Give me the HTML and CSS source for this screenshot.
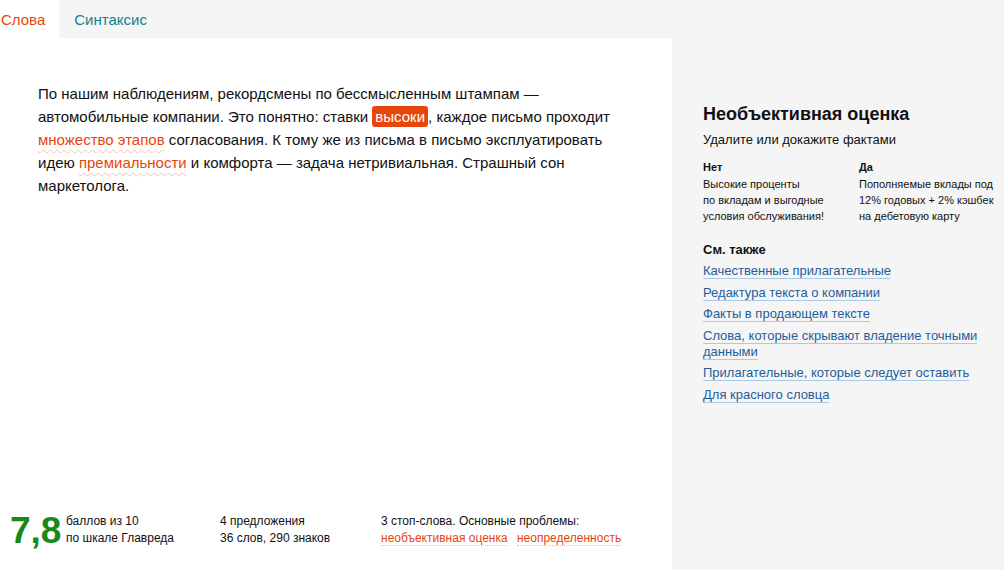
FILE: index.html
```html
<!DOCTYPE html>
<html lang="ru">
<head>
    <meta charset="UTF-8">
    <title>Главред</title>
    <link rel="stylesheet" href="styles.css">
</head>
<body>
    <div class="page">
        <!-- Редактор -->
        <main class="editor">
            <nav class="tabs">
                <a href="#" class="tab active">Слова</a>
                <a href="#" class="tab">Синтаксис</a>
            </nav>
            <div class="text">
                По нашим наблюдениям, рекордсмены по бессмысленным штампам —
                автомобильные компании. Это понятно: ставки <span class="hl">высоки</span>, каждое письмо проходит
                <span class="mark">множество этапов</span> согласования. К тому же из письма в письмо эксплуатировать
                идею <span class="mark">премиальности</span> и комфорта — задача нетривиальная. Страшный сон
                маркетолога.
            </div>
            <div class="stats">
                <div class="score">7,8</div>
                <div class="stat stat-score">баллов из 10<br>по шкале Главреда</div>
                <div class="stat stat-count">4 предложения<br>36 слов, 290 знаков</div>
                <div class="stat">
                    3 стоп-слова. Основные проблемы:<br>
                    <a href="#" class="problem">необъективная оценка</a>
                    <a href="#" class="problem">неопределенность</a>
                </div>
            </div>
        </main>

        <!-- Описание -->
        <aside class="sidebar">
            <h2>Необъективная оценка</h2>
            <p class="lead">Удалите или докажите фактами</p>
            <div class="examples">
                <div class="example">
                    <h4>Нет</h4>
                    <p>Высокие проценты<br>по вкладам и выгодные<br>условия обслуживания!</p>
                </div>
                <div class="example">
                    <h4>Да</h4>
                    <p>Пополняемые вклады под<br>12% годовых + 2% кэшбек<br>на дебетовую карту</p>
                </div>
            </div>
            <h3>См. также</h3>
            <ul class="links">
                <li><a href="#">Качественные прилагательные</a></li>
                <li><a href="#">Редактура текста о компании</a></li>
                <li><a href="#">Факты в продающем тексте</a></li>
                <li><a href="#">Слова, которые скрывают владение точными данными</a></li>
                <li><a href="#">Прилагательные, которые следует оставить</a></li>
                <li><a href="#">Для красного словца</a></li>
            </ul>
        </aside>
    </div>
</body>
</html>
```

FILE: styles.css
```css
* {
    margin: 0;
    padding: 0;
    box-sizing: border-box;
}

body {
    font-family: "Liberation Sans", Arial, sans-serif;
    color: #111;
    background-color: #f5f5f5;
}

.page {
    display: flex;
    height: 570px;
}

/* Редактор */
.editor {
    flex: none;
    width: 672px;
    display: flex;
    flex-direction: column;
    background-color: #fff;
}

.tabs {
    display: flex;
    height: 38px;
    background-color: #f5f5f5;
}

.tab {
    padding: 11px 15px 0 1px;
    font-size: 15px;
    color: #148187;
    text-decoration: none;
}

.tab.active {
    color: #e8450c;
    background-color: #fff;
    padding: 11px 14px 0 1px;
}

.tab + .tab {
    padding-left: 15px;
}

.text {
    padding: 44px 38px 0;
    font-size: 15px;
    line-height: 23px;
    flex: 1;
}

.hl {
    background-color: #e8450c;
    color: #fff;
    border-radius: 3px;
    padding: 2px 3px;
}

.mark {
    color: #e8450c;
    text-decoration: underline wavy #f9c4b0;
    text-decoration-thickness: 1px;
    text-underline-offset: 4px;
}

/* Статистика */
.stats {
    display: flex;
    align-items: flex-start;
    padding: 0 0 19px 10px;
}

.score {
    font-size: 37px;
    font-weight: bold;
    color: #178a17;
    line-height: 40px;
    margin-top: 11px;
    width: 56px;
}

.stat {
    font-size: 12px;
    line-height: 17px;
    margin-top: 13px;
}

.stat-score {
    width: 154px;
}

.stat-count {
    width: 161px;
}

.problem {
    color: #e8450c;
    text-decoration: none;
    border-bottom: 1px dotted #f5b59c;
    margin-right: 6px;
}

/* Описание */
.sidebar {
    flex: 1;
    padding: 103px 20px 0 31px;
}

.sidebar h2 {
    font-size: 18px;
    font-weight: bold;
    line-height: 22px;
}

.lead {
    font-size: 13px;
    margin-top: 6px;
    line-height: 17px;
}

.examples {
    display: flex;
    margin-top: 11px;
}

.example {
    width: 156px;
    font-size: 11px;
    line-height: 16px;
}

.example h4 {
    font-size: 11px;
    font-weight: bold;
    margin-bottom: 1px;
}

.sidebar h3 {
    font-size: 13px;
    font-weight: bold;
    margin-top: 17px;
    line-height: 17px;
}

.links {
    list-style: none;
    margin-top: 5px;
}

.links li {
    font-size: 13px;
    line-height: 16px;
    margin-bottom: 5.5px;
}

.links a {
    color: #1d5e9c;
    text-decoration: none;
    border-bottom: 1px solid #a9cbe6;
}
```
